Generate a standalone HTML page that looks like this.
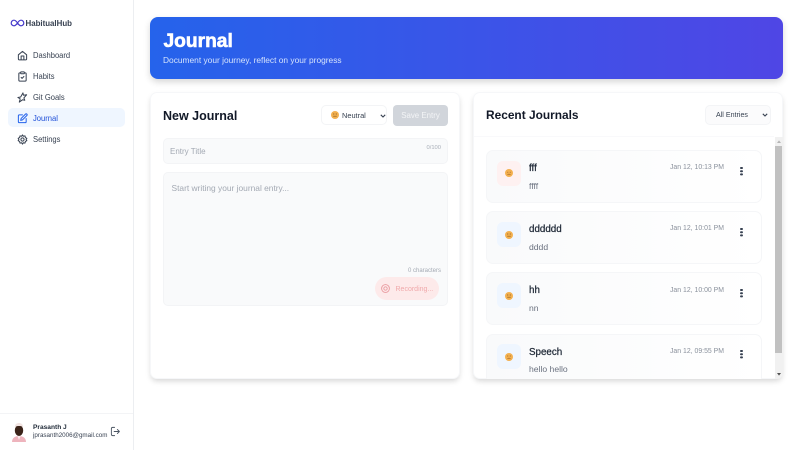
<!DOCTYPE html>
<html lang="en"><head><meta charset="utf-8"><title>Journal</title>
<style>
*{box-sizing:border-box;margin:0;padding:0}
html,body{width:800px;height:450px;overflow:hidden;background:#fff}
body{font-family:"Liberation Sans",sans-serif;position:relative}
#w{position:absolute;left:0;top:0;width:800px;height:450px;filter:blur(.3px)}
.a{position:absolute;white-space:nowrap}
.t{line-height:1}
svg{position:absolute;overflow:visible}
.nav{font-size:7.6px;color:#374151;left:33px;transform:scaleY(1.1)}
.ic{fill:none;stroke:#374151;stroke-width:2.2;stroke-linecap:round;stroke-linejoin:round}
.card{position:absolute;top:92px;width:310px;height:287px;border-radius:7px;background:#fff;border:1px solid #f6f7f9;box-shadow:0 3px 6px -1px rgba(0,0,0,.17)}
.entry{position:absolute;left:486px;width:276px;height:53px;border:1px solid #f5f6f8;border-radius:7px;background:linear-gradient(90deg,#f9fafb,#fff)}
.badge{position:absolute;left:497px;width:24px;height:25px;border-radius:6px;background:#eff6ff}
.etitle{left:529px;font-size:9.8px;color:#1f2937;-webkit-text-stroke:.25px #1f2937}
.ebody{left:529px;font-size:8.6px;color:#6b7280}
.edate{right:76px;font-size:6.9px;color:#8a919c;transform:scaleY(1.1)}
.dots{position:absolute;left:740.4px;width:2.2px;height:2.2px;border-radius:50%;background:#374151;box-shadow:0 3.2px 0 #374151,0 6.4px 0 #374151}
</style></head><body><div id="w">

<!-- Sidebar -->
<div class="a" style="left:0;top:0;width:134px;height:450px;background:#fff;border-right:1px solid #eceef1"></div>
<svg style="left:11px;top:19px" width="13" height="8" viewBox="0 0 13 8"><path d="M6.500 4C5.300 2.200 4.300 1.200 3 1.200A2.800 2.800 0 0 0 3 6.800C4.300 6.800 5.300 5.800 6.500 4C7.700 2.200 8.700 1.200 10 1.200A2.800 2.800 0 0 1 10 6.800C8.700 6.800 7.700 5.800 6.500 4Z" fill="none" stroke="#4338ca" stroke-width="1.200"/></svg>
<div class="a t" style="left:25.500px;top:19.500px;font-size:7.900px;font-weight:700;color:#374151">HabitualHub</div>

<div class="a" style="left:8px;top:108px;width:117px;height:19px;border-radius:5px;background:#eff6ff"></div>

<svg style="left:17px;top:49.500px" width="11" height="11" viewBox="0 0 24 24"><path class="ic" d="M3 10.500L12 3l9 7.500V20a1.500 1.500 0 0 1-1.500 1.500h-15A1.500 1.500 0 0 1 3 20ZM9 21.500V13h6v8.500"/></svg>
<div class="a t nav" style="top:51.700px">Dashboard</div>

<svg style="left:17px;top:70.500px" width="11" height="11" viewBox="0 0 24 24"><path class="ic" d="M8 4H6a2 2 0 0 0-2 2v14a2 2 0 0 0 2 2h12a2 2 0 0 0 2-2V6a2 2 0 0 0-2-2h-2M9 2h6a1 1 0 0 1 1 1v2a1 1 0 0 1-1 1H9a1 1 0 0 1-1-1V3a1 1 0 0 1 1-1ZM9 14l2 2 4-4"/></svg>
<div class="a t nav" style="top:72.700px">Habits</div>

<svg style="left:17px;top:91.500px" width="11" height="11" viewBox="0 0 24 24"><path class="ic" d="M13 2L8 11l-6 1 5 3-2 7 7-5 5 1-2-5 6-7-7 1Z"/></svg>
<div class="a t nav" style="top:93.700px">Git Goals</div>

<svg style="left:17px;top:112.500px" width="11" height="11" viewBox="0 0 24 24"><path class="ic" style="stroke:#2563eb" d="M12 4H5a2 2 0 0 0-2 2v13a2 2 0 0 0 2 2h13a2 2 0 0 0 2-2v-7M18.500 2.500a2.100 2.100 0 0 1 3 3L12 15l-4 1 1-4Z"/></svg>
<div class="a t nav" style="top:114.700px;color:#1d4ed8">Journal</div>

<svg style="left:17px;top:133.500px" width="11" height="11" viewBox="0 0 24 24"><circle class="ic" cx="12" cy="12" r="3.500"/><path class="ic" d="M12 2l2 3 3.500-.8.800 3.500 3.200 1.800-1.700 2.500 1.700 2.500-3.200 1.800-.8 3.500L14 19l-2 3-2-3-3.500.8-.8-3.500-3.200-1.800L4.200 12 2.500 9.500l3.200-1.800.8-3.500L10 5Z"/></svg>
<div class="a t nav" style="top:135.700px">Settings</div>

<div class="a" style="left:0;top:413px;width:133px;height:1px;background:#f3f4f6"></div>
<svg style="left:11px;top:422px" width="16" height="20" viewBox="0 0 16 20">
<path d="M1 20c0-4 3-6 7-6s7 2 7 6Z" fill="#eeb4bd"/>
<path d="M6 13h4l-2 5Z" fill="#fbe9ec"/>
<ellipse cx="8" cy="8.500" rx="4.200" ry="5.500" fill="#3b2319"/>
<path d="M3.800 5C4 2 6 1 8 1s4 1 4.200 4C10 3.700 6 3.700 3.800 5Z" fill="#f1e4e2"/>
</svg>
<div class="a t" style="left:33px;top:424.500px;font-size:6.600px;font-weight:700;color:#1f2937">Prasanth J</div>
<div class="a t" style="left:33px;top:433.200px;font-size:6.250px;color:#374151">jprasanth2006@gmail.com</div>
<svg style="left:110px;top:426px" width="11" height="11" viewBox="0 0 24 24"><path class="ic" style="stroke:#4b5563;stroke-width:2" d="M10 21H6a3 3 0 0 1-3-3V6a3 3 0 0 1 3-3h4M16 16.500L20.500 12 16 7.500M20.500 12H9"/></svg>

<!-- Banner -->
<div class="a" style="left:150px;top:17px;width:633px;height:62px;border-radius:8px;background:linear-gradient(90deg,#2563eb,#4f46e5);box-shadow:0 3px 7px rgba(0,0,0,.16)"></div>
<div class="a t" style="left:163.500px;top:31.500px;font-size:19.200px;font-weight:700;color:#fff;-webkit-text-stroke:.6px #fff">Journal</div>
<div class="a t" style="left:163px;top:56.300px;font-size:8.400px;color:#d5e3fc">Document your journey, reflect on your progress</div>

<!-- Left card -->
<div class="card" style="left:150px"></div>
<div class="a t" style="left:163px;top:109.500px;font-size:12.500px;font-weight:700;color:#111827">New Journal</div>

<div class="a" style="left:321px;top:105px;width:66px;height:20px;border-radius:5px;background:#fff;border:1px solid #f3f4f6"></div>
<svg style="left:331px;top:111px" width="8" height="8" viewBox="0 0 8 8"><circle cx="4" cy="4" r="4" fill="#f3b04f"/><path d="M2 3h1.300M4.700 3H6M2.200 5.200h3.600" stroke="#8a5a1c" stroke-width=".7"/></svg>
<div class="a t" style="left:342px;top:112px;font-size:7.400px;color:#374151">Neutral</div>
<svg style="left:379.500px;top:113.500px" width="6" height="4" viewBox="0 0 6 4"><path d="M.8.800L3 3l2.200-2.200" fill="none" stroke="#374151" stroke-width="1.100"/></svg>

<div class="a" style="left:393px;top:104.500px;width:55px;height:21px;border-radius:4px;background:#d1d5db"></div>
<div class="a t" style="left:393px;width:55px;text-align:center;top:112px;font-size:7.900px;color:#f3f4f6">Save Entry</div>

<div class="a" style="left:163px;top:138px;width:285px;height:26px;border-radius:5px;background:#f9fafb;border:1px solid #f3f4f6"></div>
<div class="a t" style="left:170px;top:147.800px;font-size:8px;color:#a3a9b3">Entry Title</div>
<div class="a t" style="right:359px;top:146px;font-size:5.800px;color:#a8aeb8">0/100</div>

<div class="a" style="left:163px;top:172px;width:285px;height:134px;border-radius:5px;background:#f9fafb;border:1px solid #f3f4f6"></div>
<div class="a t" style="left:171.500px;top:183.500px;font-size:8.400px;color:#a3a9b3">Start writing your journal entry...</div>
<div class="a t" style="right:359px;top:268.300px;font-size:6px;color:#a3a9b3">0 characters</div>
<div class="a" style="left:375px;top:277px;width:64px;height:23px;border-radius:12px;background:#fdeaea"></div>
<svg style="left:381px;top:284px" width="9" height="9" viewBox="0 0 9 9"><circle cx="4.500" cy="4.500" r="3.900" fill="none" stroke="#e99a9f" stroke-width=".9"/><circle cx="4.500" cy="4.500" r="1.700" fill="none" stroke="#e99a9f" stroke-width=".9"/></svg>
<div class="a t" style="left:395.500px;top:285.500px;font-size:7px;color:#f0a9ab">Recording...</div>

<!-- Right card -->
<div class="card" style="left:473px"></div>
<div class="a t" style="left:486px;top:109.500px;font-size:11.900px;font-weight:700;color:#111827">Recent Journals</div>
<div class="a" style="left:705px;top:104.500px;width:66px;height:20px;border-radius:5px;background:#fbfbfc;border:1px solid #f3f4f6"></div>
<div class="a t" style="left:716px;top:111.500px;font-size:7.100px;color:#374151">All Entries</div>
<svg style="left:762px;top:112.500px" width="6" height="4" viewBox="0 0 6 4"><path d="M.8.800L3 3l2.200-2.200" fill="none" stroke="#374151" stroke-width="1.100"/></svg>
<div class="a" style="left:474px;top:136px;width:300px;height:1px;background:#f9f9fb"></div>

<div class="entry" style="top:149.500px"></div>
<div class="badge" style="top:160.500px;background:#fef1f1"></div>
<svg style="left:505px;top:169px" width="8" height="8" viewBox="0 0 8 8"><circle cx="4" cy="4" r="4" fill="#f3b04f"/><path d="M2 3.200h1.300M4.700 3.200H6M2.500 5.800Q4 4.500 5.500 5.800" fill="none" stroke="#a8692a" stroke-width=".7"/></svg>
<div class="a t etitle" style="top:163.500px">fff</div>
<div class="a t ebody" style="top:181.500px">ffff</div>
<div class="a t edate" style="top:165px">Jan 12, 10:13 PM</div>
<div class="dots" style="top:166.500px"></div>

<div class="entry" style="top:210.500px"></div>
<div class="badge" style="top:221.500px"></div>
<svg style="left:505px;top:230.500px" width="8" height="8" viewBox="0 0 8 8"><circle cx="4" cy="4" r="4" fill="#f3b04f"/><path d="M2 3h1.300M4.700 3H6M2.200 5.200h3.600" stroke="#8a5a1c" stroke-width=".7"/></svg>
<div class="a t etitle" style="top:225px">dddddd</div>
<div class="a t ebody" style="top:243px">dddd</div>
<div class="a t edate" style="top:226px">Jan 12, 10:01 PM</div>
<div class="dots" style="top:227.500px"></div>

<div class="entry" style="top:272px"></div>
<div class="badge" style="top:283px"></div>
<svg style="left:505px;top:291.500px" width="8" height="8" viewBox="0 0 8 8"><circle cx="4" cy="4" r="4" fill="#f3b04f"/><path d="M2 3h1.300M4.700 3H6M2.200 5.200h3.600" stroke="#8a5a1c" stroke-width=".7"/></svg>
<div class="a t etitle" style="top:286px">hh</div>
<div class="a t ebody" style="top:304px">nn</div>
<div class="a t edate" style="top:287.500px">Jan 12, 10:00 PM</div>
<div class="dots" style="top:288.500px"></div>

<div class="entry" style="top:333.500px;height:45px;border-bottom:0;border-radius:7px 7px 0 0"></div>
<div class="badge" style="top:344px"></div>
<svg style="left:505px;top:352.500px" width="8" height="8" viewBox="0 0 8 8"><circle cx="4" cy="4" r="4" fill="#f3b04f"/><path d="M2 3h1.300M4.700 3H6M2.500 5.800Q4 4.500 5.500 5.800" fill="none" stroke="#a8692a" stroke-width=".7"/></svg>
<div class="a t etitle" style="top:347.500px">Speech</div>
<div class="a t ebody" style="top:365px">hello hello</div>
<div class="a t edate" style="top:348.500px">Jan 12, 09:55 PM</div>
<div class="dots" style="top:350px"></div>

<!-- Scrollbar -->
<div class="a" style="left:774.500px;top:137px;width:8px;height:241.500px;background:#f1f1f1;border-radius:0 0 6px 0"></div>
<div class="a" style="left:775px;top:146px;width:7px;height:207px;background:#c1c1c1"></div>
<svg style="left:776.500px;top:140px" width="4" height="3" viewBox="0 0 4 3"><path d="M2 .4L4 3H0Z" fill="#b5b5b5"/></svg>
<svg style="left:776.500px;top:372.500px" width="4" height="3" viewBox="0 0 4 3"><path d="M2 2.600L4 0H0Z" fill="#505050"/></svg>

</div></body></html>
